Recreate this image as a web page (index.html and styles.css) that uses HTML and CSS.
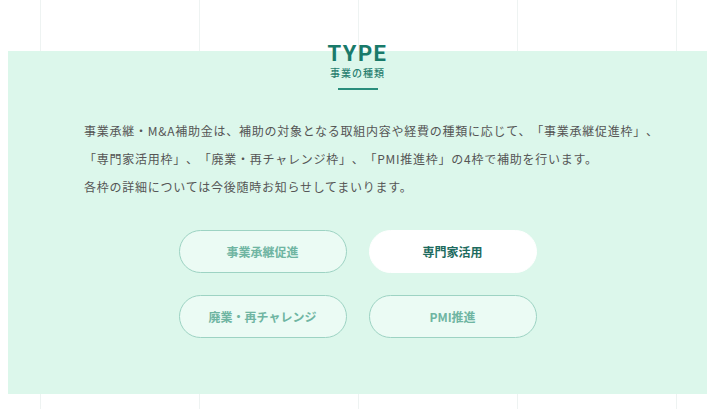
FILE: index.html
```html
<!DOCTYPE html>
<html lang="ja">

<head>
    <meta charset="UTF-8">
    <title>事業の種類</title>
    <meta name="viewport" content="width=device-width, initial-scale=1">
    <link rel="stylesheet" href="styles.css">
</head>

<body>
    <div class="page">
        <section class="type-panel">
            <div class="section-head">
                <h2>TYPE</h2>
                <p class="sub">事業の種類</p>
                <span class="head-line"></span>
            </div>
            <div class="lead">
                <p>事業承継・M&amp;A補助金は、補助の対象となる取組内容や経費の種類に応じて、「事業承継促進枠」、</p>
                <p>「専門家活用枠」、「廃業・再チャレンジ枠」、「PMI推進枠」の4枠で補助を行います。</p>
                <p>各枠の詳細については今後随時お知らせしてまいります。</p>
            </div>
            <div class="type-tabs">
                <button class="tab">事業承継促進</button>
                <button class="tab active">専門家活用</button>
                <button class="tab">廃業・再チャレンジ</button>
                <button class="tab">PMI推進</button>
            </div>
        </section>
    </div>
</body>

</html>
```

FILE: styles.css
```css
body {
    margin: 0;
    padding: 0;
    background: #fff;
    font-family: 'Noto Sans CJK JP', 'Noto Sans', sans-serif;
}

.page {
    height: 409px;
    padding-top: 51px;
    box-sizing: border-box;
    overflow: hidden;
    background-image: repeating-linear-gradient(to right, #eef3f2 0, #eef3f2 1px, transparent 1px, transparent 159px);
    background-position: 40px 0;
}

.type-panel {
    display: flow-root;
    margin-left: 8px;
    width: 699px;
    height: 343px;
    background: #dcf7eb;
    box-sizing: border-box;
    padding: 0 20px 0 76px;
}

.section-head {
    display: flex;
    flex-direction: column;
    align-items: center;
    margin-top: -9px;
    margin-left: -56px;
}

.section-head h2 {
    margin: 0;
    font-family: Roboto, 'Noto Sans', sans-serif;
    font-size: 22px;
    font-weight: 700;
    line-height: 24px;
    letter-spacing: 1.5px;
    color: #197a6a;
}

.sub {
    margin: 0;
    font-size: 10px;
    font-weight: 500;
    line-height: 14px;
    letter-spacing: 1px;
    color: #2a7f70;
}

.head-line {
    display: block;
    width: 40px;
    height: 1.5px;
    margin-top: 8px;
    background: #2a8e7c;
}

.lead {
    margin-top: 27px;
}

.lead p {
    margin: 0;
    font-size: 12px;
    line-height: 28px;
    letter-spacing: 0.75px;
    color: #555;
    text-spacing-trim: space-all;
}

.type-tabs {
    display: grid;
    grid-template-columns: 168px 168px;
    gap: 22px;
    justify-content: center;
    margin-top: 29px;
    margin-left: -56px;
}

.tab {
    height: 43px;
    border: 1px solid #9dd3c3;
    border-radius: 22px;
    background: #ebfbf4;
    font-family: 'Noto Sans CJK JP', sans-serif;
    font-size: 12px;
    font-weight: 700;
    color: #6fb5a2;
    cursor: pointer;
}

.tab.active {
    background: #fff;
    border-color: #fff;
    color: #1d6b5e;
}
```
